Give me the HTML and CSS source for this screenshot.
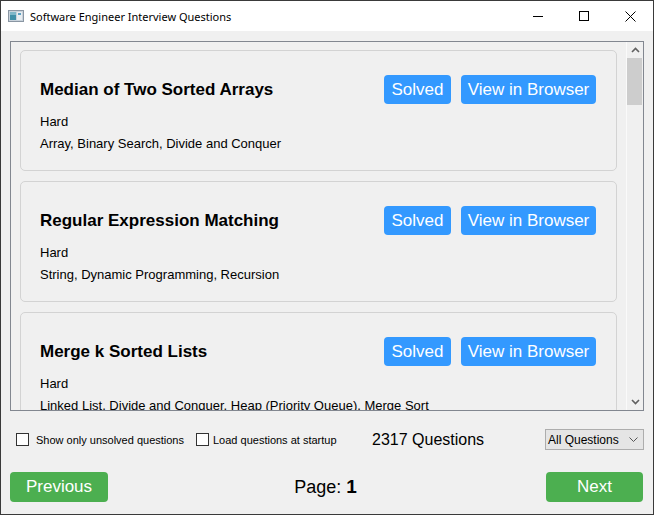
FILE: index.html
```html
<!DOCTYPE html>
<html>
<head>
<meta charset="utf-8">
<link rel="stylesheet" href="styles.css">
</head>
<body>
<div class="window">
  <div class="titlebar">
    <svg class="app-icon" width="16" height="14" viewBox="0 0 16 14">
      <rect x="0.5" y="1.5" width="15" height="11" fill="#c9d3dc" stroke="#8a96a3"/>
      <rect x="2" y="3" width="6" height="8" fill="#3f8fa8"/>
      <rect x="2" y="3" width="6" height="3" fill="#7fb7c9"/>
      <rect x="9" y="3" width="5" height="8" fill="#e8edf1"/>
      <rect x="10" y="4" width="3" height="2" fill="#5ea0c2"/>
    </svg>
    <span class="title">Software Engineer Interview Questions</span>
    <div class="caption-buttons">
      <span class="cap-btn"><svg width="10" height="10" viewBox="0 0 10 10"><path d="M0 5.5H10" stroke="#000" stroke-width="1"/></svg></span>
      <span class="cap-btn"><svg width="10" height="10" viewBox="0 0 10 10"><rect x="0.5" y="0.5" width="9" height="9" fill="none" stroke="#000"/></svg></span>
      <span class="cap-btn"><svg width="11" height="11" viewBox="0 0 11 11"><path d="M0.5 0.5L10.5 10.5M10.5 0.5L0.5 10.5" stroke="#000" stroke-width="1"/></svg></span>
    </div>
  </div>

  <div class="content">
    <div class="scroll-area">
      <div class="viewport">
        <div class="card">
          <div class="card-head">
            <span class="q-title">Median of Two Sorted Arrays</span>
            <div class="actions">
              <button class="btn blue solved">Solved</button>
              <button class="btn blue view">View in Browser</button>
            </div>
          </div>
          <div class="meta">Hard</div>
          <div class="meta">Array, Binary Search, Divide and Conquer</div>
        </div>
        <div class="card">
          <div class="card-head">
            <span class="q-title">Regular Expression Matching</span>
            <div class="actions">
              <button class="btn blue solved">Solved</button>
              <button class="btn blue view">View in Browser</button>
            </div>
          </div>
          <div class="meta">Hard</div>
          <div class="meta">String, Dynamic Programming, Recursion</div>
        </div>
        <div class="card">
          <div class="card-head">
            <span class="q-title">Merge k Sorted Lists</span>
            <div class="actions">
              <button class="btn blue solved">Solved</button>
              <button class="btn blue view">View in Browser</button>
            </div>
          </div>
          <div class="meta">Hard</div>
          <div class="meta">Linked List, Divide and Conquer, Heap (Priority Queue), Merge Sort</div>
        </div>
      </div>
      <div class="scrollbar">
        <div class="sb-arrow"><svg width="9" height="6" viewBox="0 0 9 6"><path d="M1 5L4.5 1.5L8 5" fill="none" stroke="#606060" stroke-width="1.6"/></svg></div>
        <div class="sb-track"><div class="sb-thumb"></div></div>
        <div class="sb-arrow"><svg width="9" height="6" viewBox="0 0 9 6"><path d="M1 1L4.5 4.5L8 1" fill="none" stroke="#606060" stroke-width="1.6"/></svg></div>
      </div>
    </div>

    <div class="options">
      <label class="opt first"><span class="checkbox"></span><span class="opt-text">Show only unsolved questions</span></label>
      <label class="opt second"><span class="checkbox"></span><span class="opt-text">Load questions at startup</span></label>
      <span class="count">2317 Questions</span>
      <div class="combo"><span>All Questions</span><svg width="9" height="5" viewBox="0 0 9 5"><path d="M0.5 0.5L4.5 4.5L8.5 0.5" fill="none" stroke="#555" stroke-width="1"/></svg></div>
    </div>

    <div class="pager">
      <button class="btn green prev">Previous</button>
      <span class="page">Page: <b>1</b></span>
      <button class="btn green next">Next</button>
    </div>
  </div>
</div>
</body>
</html>
```

FILE: styles.css
```css
* { box-sizing: border-box; }
html, body { margin: 0; padding: 0; }
body { width: 654px; height: 515px; overflow: hidden; background: #f0f0f0; }

.window {
  width: 654px;
  height: 515px;
  border: 1px solid #3a3a3a;
  background: #f0f0f0;
  display: flex;
  flex-direction: column;
  font-family: "Liberation Sans", Arial, sans-serif;
}

.titlebar {
  height: 30px;
  background: #ffffff;
  display: flex;
  align-items: center;
  flex: none;
}
.app-icon { margin-left: 7px; margin-right: 6px; }
.title {
  font-family: "Noto Sans", "Open Sans", sans-serif;
  font-size: 11px;
  color: #000;
}
.caption-buttons { margin-left: auto; display: flex; height: 30px; }
.cap-btn {
  width: 46px;
  height: 30px;
  display: flex;
  align-items: center;
  justify-content: center;
}

.content {
  flex: 1;
  display: flex;
  flex-direction: column;
  padding: 10px 9px 0 9px;
}

.scroll-area {
  height: 370px;
  border: 1px solid #828790;
  display: flex;
  flex: none;
}
.viewport {
  flex: 1;
  overflow: hidden;
  padding: 8px 9px;
  display: flex;
  flex-direction: column;
  gap: 10px;
}
.card {
  flex: none;
  border: 1px solid #d3d3d3;
  border-radius: 5px;
  padding: 24px 20px 14px 19px;
  height: 121px;
}
.card-head {
  display: flex;
  align-items: center;
  justify-content: space-between;
  height: 29px;
  margin-bottom: 7px;
}
.q-title {
  font-weight: bold;
  font-size: 17px;
  color: #000;
}
.actions { display: flex; gap: 10px; }
.btn {
  border: none;
  border-radius: 4px;
  color: #fff;
  font-family: "Liberation Sans", Arial, sans-serif;
  font-size: 17px;
  padding: 0;
  height: 29px;
}
.blue { background: #3399ff; }
.solved { width: 67px; }
.view { width: 135px; }
.meta {
  font-size: 13px;
  line-height: 22px;
  color: #000;
  white-space: nowrap;
}

.scrollbar {
  width: 17px;
  flex: none;
  background: #f0f0f0;
  border-left: 1px solid #fafafa;
  display: flex;
  flex-direction: column;
}
.sb-arrow {
  height: 16px;
  display: flex;
  align-items: center;
  justify-content: center;
  flex: none;
}
.sb-track { flex: 1; padding-top: 0; }
.sb-thumb {
  width: 15px;
  height: 47px;
  margin-left: 0;
  background: #cdcdcd;
}

.options {
  display: flex;
  align-items: center;
  height: 21px;
  margin-top: 18px;
  font-size: 11px;
}
.opt { display: flex; align-items: center; white-space: nowrap; }
.opt.first { margin-left: 6px; width: 180px; }
.opt.second { width: 176px; }
.checkbox {
  width: 13px;
  height: 13px;
  border: 1px solid #333;
  background: #fff;
  flex: none;
}
.first .opt-text { margin-left: 7px; }
.second .opt-text { margin-left: 4px; }
.count { font-size: 16px; color: #000; }
.combo {
  margin-left: auto;
  width: 99px;
  height: 21px;
  border: 1px solid #adadad;
  background: #e5e5e5;
  display: flex;
  align-items: center;
  justify-content: space-between;
  padding: 0 5px 0 2px;
  font-size: 12px;
}

.pager {
  display: flex;
  align-items: center;
  justify-content: space-between;
  margin-top: 22px;
  height: 30px;
}
.green { background: #4caf50; height: 30px; }
.prev { width: 98px; }
.next { width: 97px; margin-right: 1px; }
.page { font-size: 18px; color: #000; margin-left: -3px; }
.page b { font-size: 19px; }
```
